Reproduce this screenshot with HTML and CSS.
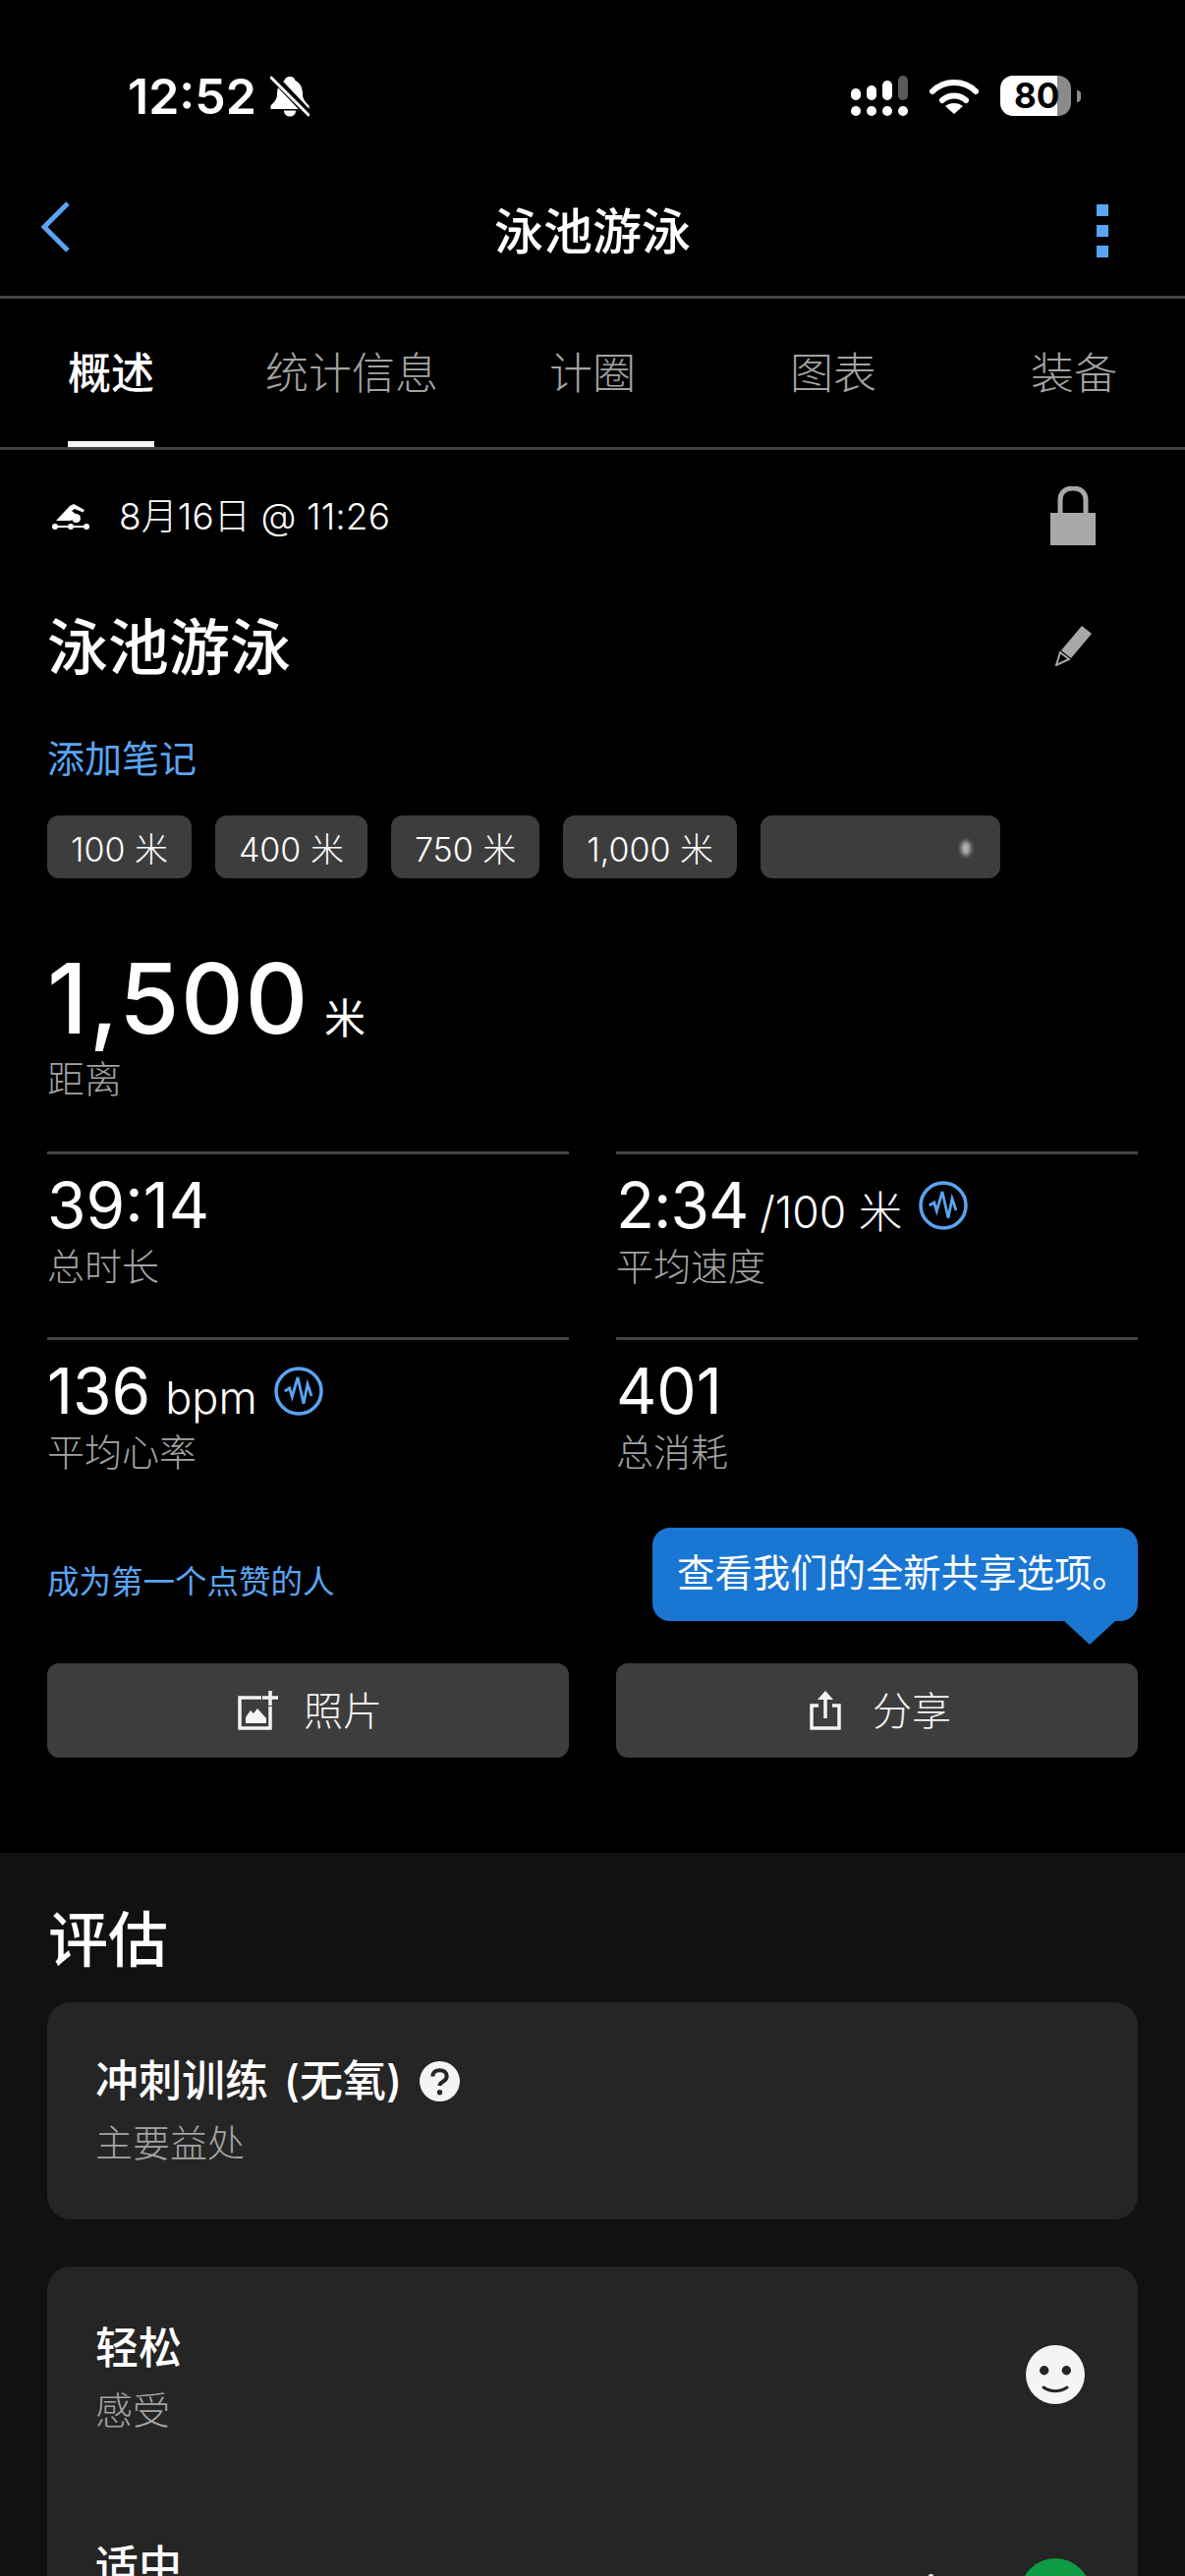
FILE: index.html
```html
<!DOCTYPE html>
<html lang="zh-CN">
<head>
<meta charset="utf-8">
<title>泳池游泳</title>
<link rel="stylesheet" href="styles.css">
</head>
<body>
<div class="page">
  <header class="status">
    <div class="status-left">
      <span class="time">12:52</span>
      <svg class="bell" viewBox="0 0 40 42"><path d="M20 1c-3 0-5 1.500-5.500 4C9 7.500 7 13 7 19c0 5-3 8-6.500 11.500V34h39v-3.500C36 27 33 24 33 19c0-6-2-11.500-7.500-14C25 2.500 23 1 20 1z" fill="#fff"/><path d="M14 35.500h12c0 4-3 6-6 6s-6-2-6-6z" fill="#fff"/><path d="M2 0l37 39" stroke="#000" stroke-width="8"/><path d="M1 2l38 38" stroke="#fff" stroke-width="3" stroke-linecap="round"/></svg>
    </div>
    <div class="status-right">
      <svg class="signal" viewBox="0 0 58 41"><g fill="#fff"><rect x="0" y="13" width="10" height="12" rx="5"/><rect x="16" y="10" width="10" height="15" rx="5"/><rect x="32" y="5" width="10" height="20" rx="5"/><rect x="48" y="0" width="10" height="25" rx="5" fill="#5a5a5a"/><circle cx="5" cy="36" r="5"/><circle cx="21" cy="36" r="5"/><circle cx="37" cy="36" r="5"/><circle cx="53" cy="36" r="5"/></g></svg>
      <svg class="wifi" viewBox="0 0 50 38"><path d="M3 15C15 3 35 3 47 15" fill="none" stroke="#fff" stroke-width="6" stroke-linecap="round"/><path d="M13 24c7-6 17-6 24 0" fill="none" stroke="#fff" stroke-width="6" stroke-linecap="round"/><path d="M25 38l-9-8c5-4 13-4 18 0z" fill="#fff"/></svg>
      <div class="battery">
        <div class="battery-body"><span class="battery-num">80</span></div>
        <span class="battery-nub"></span>
      </div>
    </div>
  </header>

  <nav class="navbar">
    <svg class="back" viewBox="0 0 30 52"><path d="M28 2L4 26l24 24" fill="none" stroke="#5aa4f2" stroke-width="5"/></svg>
    <h1 class="nav-title">泳池游泳</h1>
    <div class="more"><span></span><span></span><span></span></div>
  </nav>

  <div class="tabs">
    <div class="tab tab-active"><span>概述</span></div>
    <div class="tab"><span>统计信息</span></div>
    <div class="tab"><span>计圈</span></div>
    <div class="tab"><span>图表</span></div>
    <div class="tab"><span>装备</span></div>
  </div>

  <main class="overview">
    <div class="date-row">
      <div class="date-left">
        <svg class="swim" viewBox="0 0 40 26"><path d="M5 17L19 2l4-2 11 6-1.500 2.500L24 5l-3 2 5 4-6 6z" fill="#fff"/><circle cx="25.500" cy="14.500" r="4.500" fill="#fff"/><path d="M2 23h36" stroke="#fff" stroke-width="2"/><circle cx="4" cy="23" r="3" fill="#fff"/><circle cx="20" cy="23" r="3" fill="#fff"/><circle cx="36" cy="23" r="3" fill="#fff"/></svg>
        <span class="date-text">8月16日 @ 11:26</span>
      </div>
      <svg class="lock" viewBox="0 0 46 60"><path d="M10 28V14C10 6 15 2 23 2s13 4 13 12v14" fill="none" stroke="#a8a8a8" stroke-width="5"/><rect x="0" y="27" width="46" height="33" fill="#a8a8a8"/></svg>
    </div>

    <div class="title-row">
      <h2 class="activity-title">泳池游泳</h2>
      <svg class="pencil" viewBox="0 0 40 42"><path d="M29 1l10 8-21 25-10-8z" fill="#a8a8a8"/><path d="M7 28l9 7-13 6z" fill="none" stroke="#a8a8a8" stroke-width="2"/></svg>
    </div>

    <a class="add-note">添加笔记</a>

    <div class="chips">
      <span class="chip">100 米</span>
      <span class="chip">400 米</span>
      <span class="chip">750 米</span>
      <span class="chip">1,000 米</span>
      <span class="chip chip-blank"><i class="smudge"></i></span>
    </div>

    <div class="hero">
      <div class="hero-value"><span class="hero-num">1,500</span><span class="hero-unit">米</span></div>
      <div class="label hero-label">距离</div>
    </div>

    <div class="metrics">
      <div class="metric">
        <div class="value"><span class="num">39:14</span></div>
        <div class="label">总时长</div>
      </div>
      <div class="metric">
        <div class="value"><span class="num num-tight">2:34</span><span class="unit unit-slash">/100 米</span>
          <svg class="pulse" viewBox="0 0 50 50"><circle cx="25" cy="25" r="23" fill="none" stroke="#5aa4f2" stroke-width="3.500"/><path d="M10.700 25l5-3 2.600 8.700L24 11l6 26.700L34 18l4 12" fill="none" stroke="#5aa4f2" stroke-width="2.800"/></svg>
        </div>
        <div class="label">平均速度</div>
      </div>
      <div class="metric">
        <div class="value"><span class="num">136</span><span class="unit">bpm</span>
          <svg class="pulse" viewBox="0 0 50 50"><circle cx="25" cy="25" r="23" fill="none" stroke="#5aa4f2" stroke-width="3.500"/><path d="M10.700 25l5-3 2.600 8.700L24 11l6 26.700L34 18l4 12" fill="none" stroke="#5aa4f2" stroke-width="2.800"/></svg>
        </div>
        <div class="label">平均心率</div>
      </div>
      <div class="metric">
        <div class="value"><span class="num">401</span></div>
        <div class="label">总消耗</div>
      </div>
    </div>

    <div class="like-row">
      <a class="like-link">成为第一个点赞的人</a>
      <div class="tooltip">查看我们的全新共享选项。</div>
    </div>

    <div class="actions">
      <button class="action action-photo">
        <svg class="photo-icon" viewBox="0 0 42 40"><path d="M24 7H2v31h31V16" fill="none" stroke="#f4f4f4" stroke-width="3.500"/><path d="M8 33v-6l5-7 3 3 4-5 9 10v5z" fill="#f4f4f4"/><path d="M33 0v15M25 7h16" stroke="#f4f4f4" stroke-width="3.500"/></svg>
        <span>照片</span>
      </button>
      <button class="action action-share">
        <svg class="share-icon" viewBox="0 0 32 40"><path d="M9 15H2v23h28V15h-7" fill="none" stroke="#f4f4f4" stroke-width="3.500"/><path d="M16 4v24" stroke="#f4f4f4" stroke-width="3.500"/><path d="M16 0l8 9H8z" fill="#f4f4f4"/></svg>
        <span>分享</span>
      </button>
    </div>
  </main>

  <section class="assessment">
    <h2 class="section-title">评估</h2>
    <div class="card card-benefit">
      <div class="card-title card-title-words">冲刺训练 (无氧)
        <svg class="help" viewBox="0 0 40 40"><circle cx="20" cy="20" r="20" fill="#f4f4f4"/><path d="M13 15c0-4 3-6 7-6s7 2 7 6c0 3-2 4-4 5.500-2 1-3 2-3 4" fill="none" stroke="#252525" stroke-width="4"/><circle cx="20" cy="31" r="2.600" fill="#252525"/></svg>
      </div>
      <div class="label card-sub">主要益处</div>
    </div>
    <div class="card card-feel">
      <div class="feel-row">
        <div>
          <div class="card-title">轻松</div>
          <div class="label card-sub">感受</div>
        </div>
        <svg class="face" viewBox="0 0 60 60"><circle cx="30" cy="30" r="30" fill="#f4f4f4"/><circle cx="18.700" cy="25.700" r="4.700" fill="#252525"/><circle cx="41.300" cy="25.700" r="4.700" fill="#252525"/><path d="M18 43c7 5 17 5 24 0" fill="none" stroke="#252525" stroke-width="3" stroke-linecap="round"/></svg>
      </div>
      <div class="feel-row feel-row-next">
        <div class="card-title">适中</div>
        <i class="peek"></i>
        <span class="face-green"></span>
      </div>
    </div>
  </section>
</div>
</body>
</html>
```
FILE: styles.css
```css
* { box-sizing: border-box; margin: 0; padding: 0; }
html, body { background: #000; }
body {
  width: 1206px;
  height: 2622px;
  overflow: hidden;
  color: #fff;
  font-family: Inter, "Noto Sans CJK SC", sans-serif;
}
.page { width: 1206px; height: 2622px; overflow: hidden; display: flex; flex-direction: column; }

/* status bar */
.status { height: 196px; flex: none; padding: 77px 106px 0 130px; display: flex; justify-content: space-between; align-items: flex-start; }
.status-left { display: flex; align-items: center; gap: 14px; height: 42px; }
.time { font-size: 50px; font-weight: 600; line-height: 42px; }
.bell { width: 40px; height: 42px; display: block; }
.status-right { display: flex; align-items: flex-start; gap: 22px; }
.signal { width: 58px; height: 41px; display: block; }
.wifi { width: 50px; height: 38px; display: block; margin-top: 1px; }
.battery { display: flex; align-items: center; gap: 6px; }
.battery-body { width: 72px; height: 41px; border-radius: 13px; background: linear-gradient(90deg, #fff 0 80%, #8a8a8a 80%); display: flex; align-items: center; padding-left: 14px; }
.battery-num { color: #000; font-size: 35px; font-weight: 700; line-height: 41px; }
.battery-nub { width: 4px; height: 12px; background: #8a8a8a; border-radius: 0 6px 6px 0; }

/* nav */
.navbar { height: 108px; flex: none; display: flex; align-items: flex-start; justify-content: space-between; padding: 9px 78px 0 41px; border-bottom: 3px solid #444; }
.back { width: 30px; height: 52px; display: block; }
.nav-title { font-size: 50px; font-weight: 500; line-height: 68px; margin: -3px 0 0 19px; }
.more { display: flex; flex-direction: column; gap: 9px; padding-top: 3px; }
.more span { width: 12px; height: 12px; background: #5aa4f2; display: block; }

/* tabs */
.tabs { height: 154px; flex: none; display: flex; justify-content: center; border-bottom: 3px solid #444; }
.tab { flex: 0 0 245px; width: 245px; display: flex; justify-content: center; color: #a3a3a3; font-size: 44px; line-height: 62px; padding-top: 45px; font-weight: 300; }
.tab span { display: block; height: 106px; }
.tab-active { color: #fff; font-weight: 500; }
.tab-active span { border-bottom: 6px solid #f4f4f4; }

/* overview */
.overview { height: 1428px; flex: none; padding: 0 48px; }
.date-row { display: flex; justify-content: space-between; align-items: flex-start; padding: 37px 43px 0 4px; height: 140px; }
.date-left { display: flex; align-items: center; gap: 29px; padding-top: 7px; height: 51px; margin-top: 2px; }
.swim { width: 40px; height: 26px; display: block; }
.date-text { font-size: 37px; font-weight: 300; line-height: 46px; letter-spacing: .1px; }
.lock { width: 46px; height: 60px; display: block; }
.title-row { display: flex; justify-content: space-between; align-items: flex-start; padding: 20px 46px 0 0; height: 128px; }
.activity-title { font-size: 62px; font-weight: 500; line-height: 84px; }
.pencil { width: 40px; height: 42px; display: block; margin-top: 18px; }
.add-note { display: block; color: #5aa4f2; font-size: 38px; line-height: 52px; height: 84px; font-weight: 400; margin-top: 20px; }
.chips { display: flex; gap: 24px; height: 64px; }
.chip { height: 64px; background: #3d3d3d; border-radius: 12px; display: flex; align-items: center; justify-content: center; font-size: 34px; font-weight: 300; padding: 0 24px; }
.chip-blank { width: 244px; position: relative; }
.smudge { position: absolute; left: 204px; top: 26px; width: 10px; height: 15px; background: #b5b5b5; border-radius: 50%; filter: blur(2px); }
.hero { padding-top: 66px; height: 278px; }
.hero-value { display: flex; align-items: baseline; gap: 15px; height: 112px; }
.hero-num { font-size: 99px; font-weight: 500; line-height: 112px; letter-spacing: 1.600px; }
.hero-unit { font-size: 42px; font-weight: 400; line-height: 52px; }
.label { color: #a3a3a3; font-size: 38px; line-height: 50px; font-weight: 300; }
.hero-label { margin-top: 1px; }
.metrics { display: grid; grid-template-columns: 531px 531px; column-gap: 48px; }
.metric { height: 189px; border-top: 3px solid #444; padding-top: 22px; }
.value { display: flex; align-items: center; height: 60px; }
.num { font-size: 64px; font-weight: 400; line-height: 60px; }
.num-tight { letter-spacing: -1px; }
.unit { font-size: 45px; font-weight: 300; margin-left: 15px; line-height: 60px; margin-top: 14px; }
.unit-slash { margin-left: 12px; font-size: 44.500px; }
.pulse { width: 50px; height: 50px; display: block; margin-left: 17px; }
.metric .label { margin-top: 7px; }
.like-row { display: flex; justify-content: space-between; align-items: flex-start; height: 138px; margin-top: 5px; }
.like-link { color: #5aa4f2; font-size: 32.500px; line-height: 46px; margin-top: 33px; font-weight: 400; }
.tooltip { width: 494px; height: 95px; background: #1976d2; border-radius: 18px; padding-left: 25px; font-size: 38.400px; line-height: 92px; position: relative; font-weight: 400; white-space: nowrap; }
.tooltip::after { content: ""; position: absolute; left: 419px; top: 95px; border-left: 26px solid transparent; border-right: 26px solid transparent; border-top: 24px solid #1976d2; }
.actions { display: grid; grid-template-columns: 531px 531px; column-gap: 48px; }
.action { height: 96px; background: #3d3d3d; border: 0; border-radius: 12px; color: #f4f4f4; font: inherit; font-size: 40px; font-weight: 300; display: flex; align-items: center; justify-content: center; }
.action-photo { gap: 25px; padding-left: 4px; }
.action-share { gap: 32px; padding-left: 7px; }
.action span { line-height: 52px; padding-top: 2px; }
.photo-icon { width: 42px; height: 40px; display: block; }
.share-icon { width: 32px; height: 40px; display: block; }

/* assessment */
.assessment { flex: 1; background: #111; padding: 47px 48px 0; }
.section-title { font-size: 61px; font-weight: 500; line-height: 84px; height: 105px; padding-left: 1px; }
.card { background: #252525; border-radius: 24px; padding: 0 49px; }
.card-benefit { height: 221px; padding-top: 50px; margin-bottom: 48px; }
.card-title { font-size: 44px; font-weight: 500; line-height: 60px; display: flex; align-items: center; gap: 18px; }
.card-title-words { word-spacing: 4px; }
.card-sub { margin-top: 8px; }
.help { width: 41px; height: 41px; display: block; }
.card-feel { height: 400px; padding-top: 51px; }
.feel-row { display: flex; justify-content: space-between; align-items: center; padding-right: 5px; height: 122px; }
.feel-row-next { margin-top: 100px; align-items: flex-start; position: relative; padding-top: 2px; }
.face { width: 60px; height: 60px; display: block; margin-top: -4px; }
.face-green { width: 72px; height: 72px; border-radius: 50%; background: #0f9a44; display: block; margin: 22px -6px 0 0; }
.peek { position: absolute; left: 848px; top: 40px; width: 5px; height: 4px; background: #e8e8e8; border-radius: 2px 2px 0 0; }
```
